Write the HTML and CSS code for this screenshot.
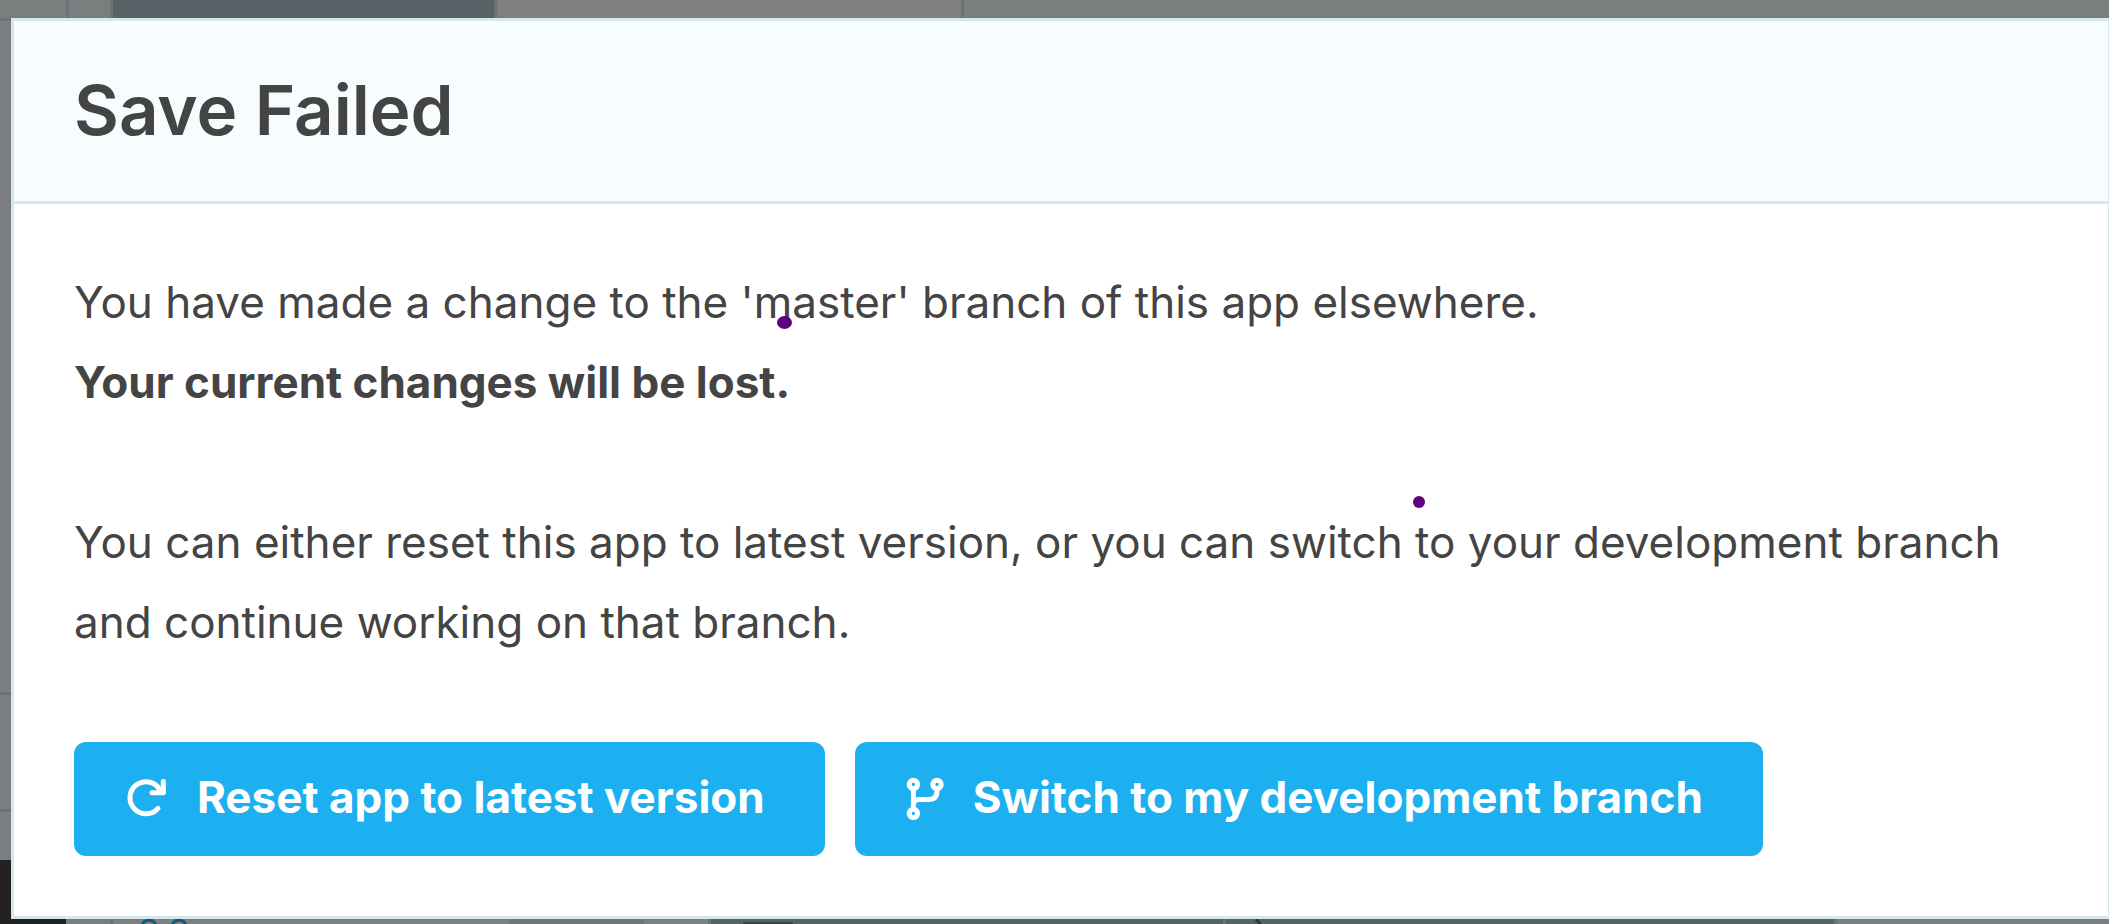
FILE: index.html
```html
<!DOCTYPE html>
<html lang="en">
<head>
    <meta charset="UTF-8">
    <meta name="viewport" content="width=device-width, initial-scale=1.0">
    <title>Save Failed</title>
    <link rel="stylesheet" href="styles.css">
</head>
<body>
    <div class="app" aria-hidden="true">
        <div class="app-top">
            <div class="cell rail"></div>
            <div class="cell gutter"></div>
            <div class="cell tab"></div>
            <div class="cell panel"></div>
            <div class="cell rest"></div>
        </div>
        <div class="app-side">
            <div class="side-item side-main"></div>
            <div class="side-item side-small"></div>
            <div class="side-item side-last"></div>
            <div class="side-dark"></div>
        </div>
        <div class="app-bottom">
            <div class="dark"></div>
            <div class="cell bottom-gutter"></div>
            <div class="cell bottom-panel">
                <svg width="46" height="5" viewBox="0 0 46 5" fill="none" stroke="#0e5a79" stroke-width="3">
                    <circle cx="8" cy="8" r="7"/>
                    <circle cx="38" cy="8" r="7"/>
                </svg>
                <div class="bottom-shade"></div>
            </div>
            <div class="cell bottom-tab"><div class="handle"></div></div>
            <div class="cell bottom-wide">
                <svg width="10" height="5" viewBox="0 0 10 5" stroke="#30393d" stroke-width="3">
                    <path d="M1 0L6 6"/>
                </svg>
            </div>
            <div class="rest"></div>
        </div>
    </div>

    <div class="modal" role="dialog" aria-labelledby="modal-title">
        <div class="modal-header">
            <h1 id="modal-title">Save Failed</h1>
        </div>
        <div class="modal-body">
            <p>You have made a change to the 'master' branch of this app elsewhere.<br>
            <strong>Your current changes will be lost.</strong></p>
            <p>You can either reset this app to latest version, or you can switch to your development branch<br>
            and continue working on that branch.</p>
            <div class="buttons">
                <button type="button" class="btn">
                    <svg width="44" height="44" viewBox="0 0 44 44" fill="none" stroke="#fff" stroke-width="5" stroke-linecap="round" stroke-linejoin="round">
                        <path d="M33 31.3A16 16 0 1 1 34.5 12.2L38 15.5"/>
                        <path d="M38.3 4.6V15.8H27"/>
                        <path d="M33 10L38 15.5L31 15" fill="#fff" stroke-width="2"/>
                    </svg>
                    <span>Reset app to latest version</span>
                </button>
                <button type="button" class="btn">
                    <svg width="39" height="44" viewBox="0 0 39 44" fill="none" stroke="#fff" stroke-width="5">
                        <circle cx="7.4" cy="7.4" r="4.2"/>
                        <circle cx="31" cy="7.4" r="4.2"/>
                        <circle cx="7.4" cy="36.4" r="4.2"/>
                        <path d="M7.4 12V32M31 12V14Q31 22.5 22.5 22.5H13Q7.4 22.5 7.4 28"/>
                    </svg>
                    <span>Switch to my development branch</span>
                </button>
            </div>
        </div>
    </div>

    <div class="dot dot-one"></div>
    <div class="dot dot-two"></div>
</body>
</html>
```

FILE: styles.css
```css
* {
    box-sizing: border-box;
}
body {
    margin: 0;
    height: 100vh;
    overflow: hidden;
    position: relative;
    background-color: #7a7e7e;
    color: #444;
    font-family: Inter, "Open Sans", sans-serif;
}

/* dimmed app behind the dialog */
.app {
    display: flex;
    flex-direction: column;
    height: 100%;
}
.app-top {
    display: flex;
    height: 21px;
    border-bottom: 3px solid #6a7477;
}
.cell {
    border-right: 3px solid #6a7477;
}
.rail {
    width: 69px;
}
.gutter {
    width: 44px;
}
.tab {
    width: 384px;
    background: #586367;
}
.panel {
    width: 467px;
    background: #7f7f7f;
}
.rest {
    flex: 1;
    border: none;
}
.app-side {
    flex: 1;
    display: flex;
    flex-direction: column;
    width: 66px;
}
.side-item {
    border-bottom: 3px solid #6a7477;
}
.side-main {
    flex: 1;
}
.side-small {
    height: 117px;
}
.side-last {
    height: 48px;
    border: none;
}
.side-dark {
    height: 59px;
    background: #222;
}
.app-bottom {
    display: flex;
    height: 5px;
}
.dark {
    width: 66px;
    background: #222;
}
.bottom-gutter {
    width: 47px;
}
.bottom-panel {
    display: flex;
    justify-content: space-between;
    width: 598px;
    padding: 0 64px 0 28px;
    background: #7f7f7f;
}
.bottom-shade {
    width: 135px;
    background: #757575;
}
.bottom-tab {
    width: 515px;
    padding: 3px 0 0 32px;
    background: #586367;
}
.handle {
    width: 50px;
    height: 2px;
    background: #3c464a;
}
.bottom-wide {
    width: 611px;
    padding-left: 29px;
    background: #586367;
}
svg {
    display: block;
    flex-shrink: 0;
}

/* dialog */
.modal {
    position: absolute;
    top: 18px;
    left: 11px;
    right: -2px;
    background: #fff;
    border: 3px solid #d5e8ed;
}
.modal-header {
    margin-top: 3px;
    padding: 38px 60px 42px;
    background: #f7fcff;
    border-bottom: 3px solid #d5e8ed;
}
h1 {
    margin: 0;
    font-size: 69px;
    font-weight: 600;
    line-height: 97px;
}
.modal-body {
    padding: 58px 60px 60px;
}
p {
    margin: 0 0 80px;
    font-size: 44px;
    line-height: 80px;
    white-space: nowrap;
}
strong {
    font-weight: 700;
}
.buttons {
    display: flex;
    gap: 30px;
}
.btn {
    display: flex;
    align-items: center;
    gap: 28px;
    height: 114px;
    padding: 0 60px 0 51px;
    border: none;
    border-radius: 12px;
    background: #1cb0f0;
    color: #fff;
    font-family: inherit;
    font-size: 44px;
    font-weight: 700;
    white-space: nowrap;
    cursor: pointer;
}
.btn span {
    padding-bottom: 4px;
}

/* pointer marks */
.dot {
    position: absolute;
    border-radius: 50%;
    background: #5f007f;
}
.dot-one {
    top: 316px;
    left: 777px;
    width: 15px;
    height: 13px;
}
.dot-two {
    top: 496px;
    left: 1413px;
    width: 12px;
    height: 12px;
}
```
